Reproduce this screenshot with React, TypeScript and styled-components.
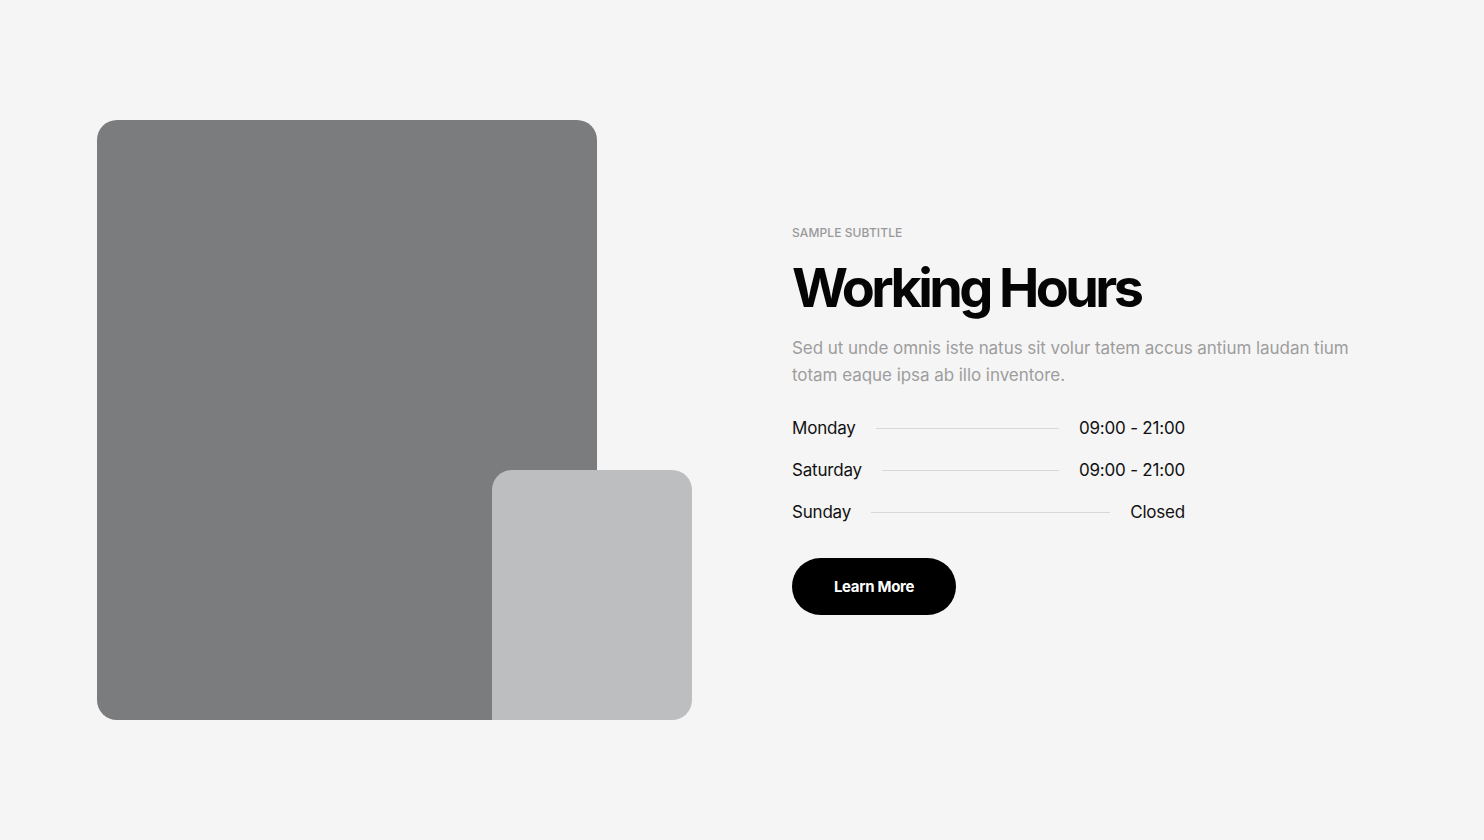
import React from 'react';
import styled, { createGlobalStyle } from 'styled-components';

const GlobalStyle = createGlobalStyle`
  html, body {
    margin: 0;
    padding: 0;
    background: #f5f5f5;
    font-family: Inter, 'Noto Sans', sans-serif;
  }
`

const Section = styled.section`
  display: flex;
  align-items: center;
  gap: 100px;
  padding: 120px 0 120px 97px;
  min-height: 600px;
`

const Media = styled.div`
  display: grid;
  grid-template-columns: 395px 105px 95px;
  grid-template-rows: 350px 250px;
  flex-shrink: 0;
`

const BigCard = styled.div`
  grid-column: 1 / 3;
  grid-row: 1 / 3;
  background: #7b7c7d;
  border-radius: 20px;
`

const SmallCard = styled.div`
  grid-column: 2 / 4;
  grid-row: 2 / 3;
  background: #bdbebf;
  border-radius: 20px 20px 20px 0;
`

const Content = styled.div`
  display: flex;
  flex-direction: column;
  width: 580px;
`

const Subtitle = styled.span`
  font-size: 12px;
  font-weight: 500;
  color: #999999;
  text-transform: uppercase;
  letter-spacing: 0.1px;
  line-height: 16px;
`

const Title = styled.h2`
  margin: 14px 0 0;
  font-size: 54px;
  font-weight: 700;
  letter-spacing: -3.6px;
  line-height: 66px;
  color: #050505;
`

const Text = styled.p`
  margin: 14px 0 0;
  font-size: 17px;
  line-height: 27px;
  color: #9d9d9d;
  letter-spacing: -0.05px;
`

const Hours = styled.ul`
  list-style: none;
  margin: 27px 0 0;
  padding: 0;
  width: 393px;
  display: flex;
  flex-direction: column;
  gap: 18px;
`

const Row = styled.li`
  display: flex;
  align-items: center;
  gap: 20px;
  font-size: 17px;
  line-height: 24px;
  color: #111111;
  letter-spacing: -0.2px;
`

const Dash = styled.span`
  flex: 1;
  height: 1px;
  background: #d8d8d8;
`

const Button = styled.button`
  margin-top: 34px;
  width: 164px;
  height: 57px;
  border: none;
  border-radius: 30px;
  background: #000;
  color: #fff;
  font-family: Inter, 'Noto Sans', sans-serif;
  font-size: 15px;
  font-weight: 700;
  letter-spacing: -0.3px;
  cursor: pointer;
`

const hours = [
  { day: 'Monday', time: '09:00 - 21:00' },
  { day: 'Saturday', time: '09:00 - 21:00' },
  { day: 'Sunday', time: 'Closed' },
]

const App: React.FC = () => {
  return (
    <>
      <GlobalStyle />
      <Section>
        <Media>
          <BigCard />
          <SmallCard />
        </Media>
        <Content>
          <Subtitle>Sample Subtitle</Subtitle>
          <Title>Working Hours</Title>
          <Text>
            Sed ut unde omnis iste natus sit volur tatem accus antium laudan tium totam eaque ipsa ab illo inventore.
          </Text>
          <Hours>
            {hours.map(h => (
              <Row key={h.day}>
                <span>{h.day}</span>
                <Dash />
                <span>{h.time}</span>
              </Row>
            ))}
          </Hours>
          <Button>Learn More</Button>
        </Content>
      </Section>
    </>
  )
}

export default App
